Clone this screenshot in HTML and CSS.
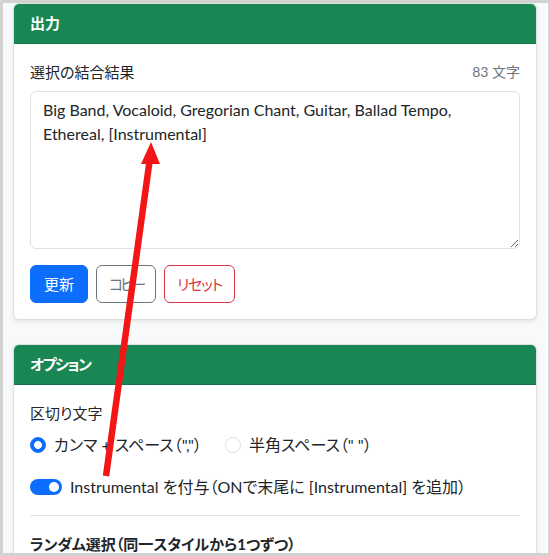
FILE: index.html
```html
<!DOCTYPE html>
<html lang="ja">
<head>
<meta charset="utf-8">
<title>出力</title>
<link rel="stylesheet" href="styles.css">
</head>
<body>
<div class="frame">
  <section class="card">
    <div class="card-header">出力</div>
    <div class="card-body">
      <div class="label-row">
        <span class="label">選択の結合結果</span>
        <span class="count">83 文字</span>
      </div>
      <textarea class="output" spellcheck="false">Big Band, Vocaloid, Gregorian Chant, Guitar, Ballad Tempo, Ethereal, [Instrumental]</textarea>
      <div class="buttons">
        <button class="btn btn-primary">更新</button>
        <button class="btn btn-outline-secondary">コピー</button>
        <button class="btn btn-outline-danger">リセット</button>
      </div>
    </div>
  </section>

  <section class="card">
    <div class="card-header tight">オプション</div>
    <div class="card-body">
      <div class="label">区切り文字</div>
      <div class="radios">
        <label class="check">
          <span class="radio checked"></span>
          <span>カンマ + スペース（","）</span>
        </label>
        <label class="check">
          <span class="radio"></span>
          <span>半角スペース（" "）</span>
        </label>
      </div>
      <label class="switch-row">
        <span class="switch"></span>
        <span>Instrumental を付与（ONで末尾に [Instrumental] を追加）</span>
      </label>
      <hr class="divider">
      <div class="section-title">ランダム選択（同一スタイルから1つずつ）</div>
    </div>
  </section>
</div>
<svg class="annot" width="550" height="556" viewBox="0 0 550 556" aria-hidden="true">
  <line x1="106" y1="476" x2="150" y2="158" stroke="#f31616" stroke-width="6.5" stroke-linecap="butt"/>
  <polygon points="151,142 141,164 160,164" fill="#f31616"/>
</svg>
</body>
</html>
```
FILE: styles.css
```css
* { box-sizing: border-box; }
html, body { margin: 0; padding: 0; }
body {
  position: relative;
  width: 550px;
  height: 556px;
  overflow: hidden;
  background: #d2d2d2;
  font-family: "Lato", "Noto Sans CJK JP", sans-serif;
  font-size: 16px;
  line-height: 24px;
  color: #212529;
  font-feature-settings: "palt";
}
.frame {
  width: 550px;
  height: 556px;
  border-style: solid;
  border-color: #d2d2d2;
  border-width: 3px 2px 3px 3px;
  background: #f8f9fa;
  box-shadow: inset -2px 0 0 #ffffff;
  padding: 0 11px 0 10px;
  overflow: hidden;
}
.card {
  background: #fff;
  border: 1px solid rgba(0, 0, 0, 0.13);
  border-radius: 6px;
  box-shadow: 0 2px 4px rgba(0, 0, 0, 0.075);
  overflow: hidden;
  margin-bottom: 24px;
}
.card-header {
  background: #198754;
  color: #fff;
  font-weight: 700;
  font-size: 15px;
  padding: 8px 16px;
  line-height: 23px;
  border-bottom: 1px solid rgba(0, 0, 0, 0.15);
}
.card-header.tight { letter-spacing: -1.5px; }
.card-body { padding: 16px; }
.label-row {
  display: flex;
  justify-content: space-between;
  align-items: center;
  margin-bottom: 7px;
}
.label { font-size: 15px; }
.count { font-size: 14px; color: #6c757d; }
.output {
  display: block;
  width: 100%;
  height: 158px;
  margin: 0;
  padding: 6px 12px;
  border: 1px solid #dee2e6;
  border-radius: 6px;
  font: inherit;
  font-size: 16px;
  line-height: 24px;
  color: #212529;
  resize: vertical;
  outline: none;
}
.buttons {
  display: flex;
  gap: 8px;
  margin-top: 16px;
}
.btn {
  font: inherit;
  font-size: 15px;
  line-height: 24px;
  padding: 6px 13px;
  border-radius: 6px;
  border: 1px solid transparent;
  background: transparent;
  cursor: pointer;
}
.btn-primary { background: #0d6efd; border-color: #0d6efd; color: #fff; }
.btn-outline-secondary { border-color: #6c757d; color: #6c757d; padding: 6px 12px; letter-spacing: -3px; }
.btn-outline-danger { border-color: #dc3545; color: #dc3545; padding: 6px 12px; letter-spacing: -1.2px; }

.radios {
  display: flex;
  margin-top: 8px;
  margin-bottom: 18px;
}
.check {
  display: inline-flex;
  align-items: center;
  gap: 8px;
  margin-right: 23px;
}
.radio {
  width: 16px;
  height: 16px;
  border-radius: 50%;
  border: 1px solid #dee2e6;
  background: #fff;
  flex: none;
}
.radio.checked {
  border-color: #0d6efd;
  background: radial-gradient(circle, #fff 0 3.6px, #0d6efd 4.2px);
}
.switch-row {
  display: flex;
  align-items: center;
  gap: 8px;
}
.switch {
  position: relative;
  width: 32px;
  height: 16px;
  border-radius: 8px;
  background: #0d6efd;
  flex: none;
}
.switch::after {
  content: "";
  position: absolute;
  right: 3px;
  top: 3px;
  width: 10px;
  height: 10px;
  border-radius: 50%;
  background: #fff;
}
.divider {
  border: 0;
  border-top: 1px solid #dee2e6;
  margin: 16px 0;
}
.section-title { font-weight: 700; font-size: 15px; }
.annot {
  position: absolute;
  left: 0;
  top: 0;
  pointer-events: none;
}
```
